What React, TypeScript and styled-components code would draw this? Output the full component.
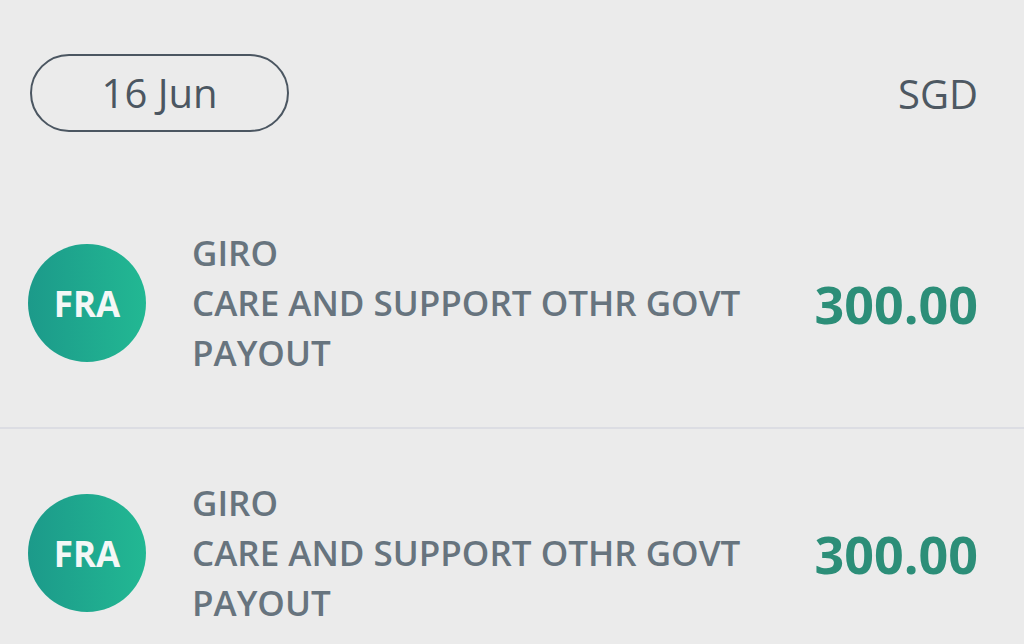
import React from 'react';
import styled, { createGlobalStyle } from 'styled-components';

const GlobalStyle = createGlobalStyle`
  html, body {
    margin: 0;
    padding: 0;
    background: #ebebeb;
    font-family: 'Open Sans', 'Liberation Sans', sans-serif;
  }
`;

const Page = styled.div`
  width: 1024px;
  height: 644px;
  overflow: hidden;
  background: #ebebeb;
`;

const Header = styled.div`
  display: flex;
  align-items: center;
  justify-content: space-between;
  padding: 54px 46px 47px 30px;
`;

const DatePill = styled.div`
  box-sizing: border-box;
  width: 259px;
  height: 78px;
  border: 2.5px solid #4b5661;
  border-radius: 39px;
  display: flex;
  align-items: center;
  justify-content: center;
  font-size: 40px;
  color: #4b5661;
  padding-bottom: 2px;
`;

const Currency = styled.div`
  font-size: 40px;
  color: #4d5862;
`;

const Row = styled.div`
  display: flex;
  align-items: center;
  height: 248px;
  padding: 0 46px 0 28px;
  border-bottom: 2px solid #dcdde3;
`;

const Avatar = styled.div`
  flex: none;
  width: 118px;
  height: 118px;
  border-radius: 50%;
  background: linear-gradient(90deg, #1c9a8a 0%, #22b893 100%);
  display: flex;
  align-items: center;
  justify-content: center;
  color: #f4f7f6;
  font-size: 35px;
  font-weight: 700;
`;

const Details = styled.div`
  flex: 1;
  margin-left: 46px;
  font-size: 35px;
  font-weight: 600;
  line-height: 50px;
  color: #67747e;
`;

const Amount = styled.div`
  font-size: 52px;
  font-weight: 700;
  color: #2c8e78;
`;

interface TxProp {
  code: string;
  lines: string[];
  amount: string;
}

const Transaction = (prop: TxProp) => (
  <Row>
    <Avatar>{prop.code}</Avatar>
    <Details>
      {prop.lines.map((l) => (
        <div key={l}>{l}</div>
      ))}
    </Details>
    <Amount>{prop.amount}</Amount>
  </Row>
);

const txs = [
  { code: 'FRA', lines: ['GIRO', 'CARE AND SUPPORT OTHR GOVT', 'PAYOUT'], amount: '300.00' },
  { code: 'FRA', lines: ['GIRO', 'CARE AND SUPPORT OTHR GOVT', 'PAYOUT'], amount: '300.00' },
];

export default function App() {
  return (
    <Page>
      <GlobalStyle />
      <Header>
        <DatePill>16 Jun</DatePill>
        <Currency>SGD</Currency>
      </Header>
      {txs.map((t, i) => (
        <Transaction key={i} {...t} />
      ))}
    </Page>
  );
}
